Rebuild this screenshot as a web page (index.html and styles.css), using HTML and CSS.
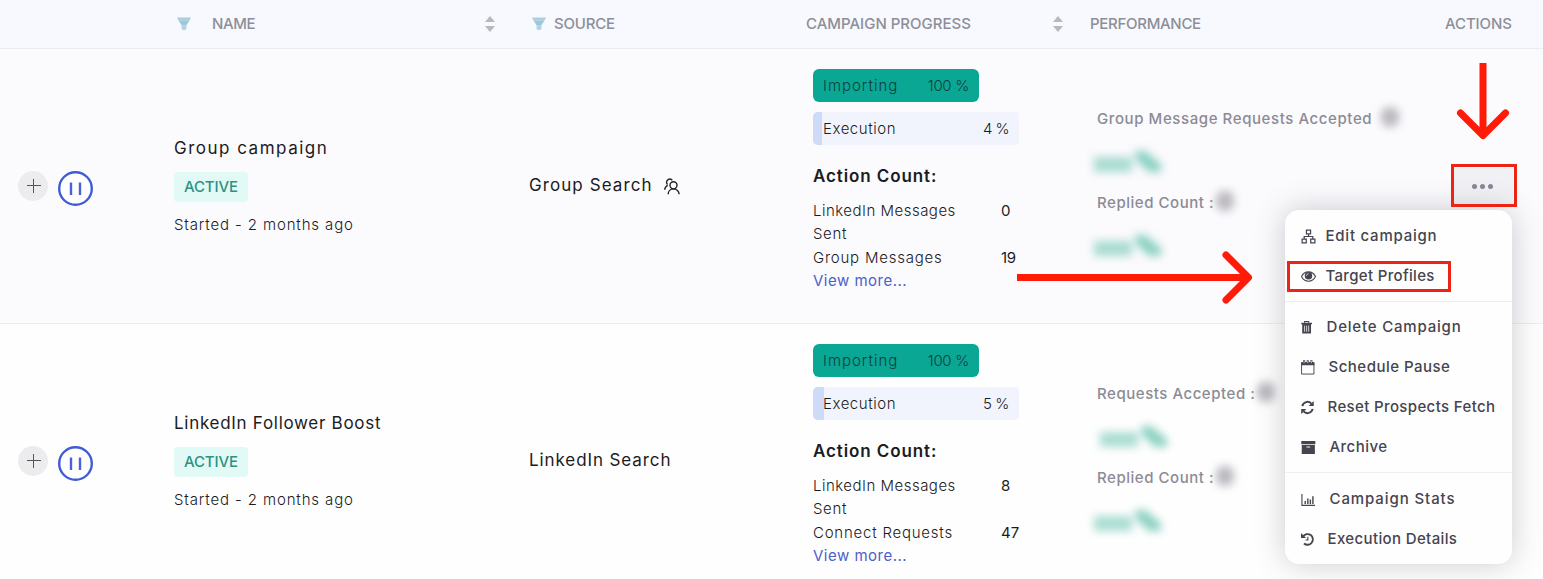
FILE: index.html
```
<!DOCTYPE html>
<html lang="en">
<head>
<meta charset="utf-8">
<title>Campaigns</title>
<link rel="stylesheet" href="styles.css">
</head>
<body>
<svg width="0" height="0" class="defs">
  <symbol id="filter" viewBox="0 0 14 14"><path d="M0 .5h14l-1.500 3h-11z" fill="#a9cfe0"/><path d="M1.500 3.500h11L9.500 8h-5z" fill="#9cc6da"/><path d="M4.500 8h5v3.500L8.500 13h-3l-1-1.500z" fill="#b2d5e3"/></symbol>
  <symbol id="sort" viewBox="0 0 10 16"><path d="M5 0l5 6H0zM5 16l5-6H0z" fill="#b9b9bd"/></symbol>
  <symbol id="pause" viewBox="0 0 36 36"><circle cx="18.500" cy="18.500" r="16.300" fill="#fff" stroke="#3f5cd8" stroke-width="2.400"/><path d="M14 12.500V25M23 12.500V25" stroke="#4a62d6" stroke-width="2.400"/></symbol>
  <symbol id="plus" viewBox="0 0 30 30"><circle cx="15" cy="15" r="15" fill="#ececef"/><path d="M9 14.500h14M15.500 8v14" stroke="#555" stroke-width="1"/></symbol>
  <symbol id="blur" viewBox="0 0 80 40"><g fill="#86cfbf"><rect x="5" y="14" width="38" height="15" opacity=".7"/><path d="M46 8h10l16 13v8H60L47 17z" opacity=".95"/></g></symbol>
</svg>
<div class="table">
  <div class="row head">
    <div></div>
    <div class="th name"><svg class="filter"><use href="#filter"/></svg><span class="t n4">NAME</span><svg class="sort"><use href="#sort"/></svg></div>
    <div class="th source"><svg class="filter"><use href="#filter"/></svg><span class="t n2">SOURCE</span></div>
    <div class="th progress"><span class="t">CAMPAIGN PROGRESS</span><svg class="sort"><use href="#sort"/></svg></div>
    <div class="th perf"><span class="t n3">PERFORMANCE</span></div>
    <div class="th acts"><span class="t n1">ACTIONS</span></div>
  </div>

  <div class="row body tinted">
    <div class="controls"><svg class="plus"><use href="#plus"/></svg><svg class="pause"><use href="#pause"/></svg></div>
    <div class="name-cell">
      <div class="title"><span class="t p15">Group campaign</span></div>
      <div class="badge"><span class="t n1">ACTIVE</span></div>
      <div class="started"><span class="t p85">Started - 2 months ago</span></div>
    </div>
    <div class="source-cell"><span class="t p10">Group Search</span>
      <svg class="people" viewBox="0 0 17 17" fill="none" stroke="#222" stroke-width="1.400"><circle cx="9.500" cy="7.300" r="3.500"/><path d="M4.200 16.200c0-3 2.200-5.300 5.300-5.300s5.600 2.300 5.600 5.300M8.300 2.200C7.300.9 5.400.7 4 1.600 2.200 2.700 2.200 5 3.500 6.500M.7 11.700c.2-2 1.200-3.600 3-4.400"/></svg>
    </div>
    <div class="progress-cell">
      <div class="bar done"><span class="t p95">Importing</span><span class="t n3">100 %</span></div>
      <div class="bar exec"><i class="fill" style="width:4.500%"></i><span class="t p55">Execution</span><span class="t n5">4 %</span></div>
      <div class="count-title"><span class="t p90">Action Count:</span></div>
      <div class="count"><div class="label"><span class="t p50">LinkedIn Messages</span><br><span class="t p60">Sent</span></div><b>0</b></div>
      <div class="count"><div class="label"><span class="t p75">Group Messages</span></div><b class="n4">19</b></div>
      <div class="more"><span class="t p50">View more...</span></div>
    </div>
    <div class="perf-cell">
      <div class="metric"><span class="t p58">Group Message Requests Accepted</span><i class="smudge gap"></i></div>
      <svg class="value"><use href="#blur"/></svg>
      <div class="metric"><span class="t p55">Replied Count :</span><i class="smudge"></i></div>
      <svg class="value"><use href="#blur"/></svg>
    </div>
    <div class="action-cell"><div class="dots"><i></i><i></i><i></i></div></div>
  </div>

  <div class="row body">
    <div class="controls"><svg class="plus"><use href="#plus"/></svg><svg class="pause"><use href="#pause"/></svg></div>
    <div class="name-cell">
      <div class="title"><span class="t p70">LinkedIn Follower Boost</span></div>
      <div class="badge"><span class="t n1">ACTIVE</span></div>
      <div class="started"><span class="t p85">Started - 2 months ago</span></div>
    </div>
    <div class="source-cell"><span class="t p90">LinkedIn Search</span></div>
    <div class="progress-cell">
      <div class="bar done"><span class="t p95">Importing</span><span class="t n3">100 %</span></div>
      <div class="bar exec"><i class="fill" style="width:5.300%"></i><span class="t p55">Execution</span><span class="t n4">5 %</span></div>
      <div class="count-title"><span class="t p90">Action Count:</span></div>
      <div class="count"><div class="label"><span class="t p50">LinkedIn Messages</span><br><span class="t p60">Sent</span></div><b>8</b></div>
      <div class="count"><div class="label"><span class="t p75">Connect Requests</span></div><b>47</b></div>
      <div class="more"><span class="t p50">View more...</span></div>
    </div>
    <div class="perf-cell">
      <div class="metric"><span class="t p55">Requests Accepted :</span><i class="smudge"></i></div>
      <svg class="value wide"><use href="#blur"/></svg>
      <div class="metric"><span class="t p55">Replied Count :</span><i class="smudge"></i></div>
      <svg class="value"><use href="#blur"/></svg>
    </div>
    <div></div>
  </div>
</div>

<div class="menu">
  <div class="item"><svg viewBox="0 0 16 16" fill="none" stroke="currentColor" stroke-width="1.300"><path d="M5.800 1.200h4.400v4H5.800zM1.200 10.800h4.400v4H1.200zM10.400 10.800h4.400v4h-4.400zM8 5.200V8M3.400 10.800V8h9.200v2.800"/></svg><span class="t p75">Edit campaign</span></div>
  <div class="item"><svg viewBox="0 0 16 16"><path d="M8 3C4.500 3 2 5 .5 8 2 11 4.500 13 8 13s6-2 7.500-5C14 5 11.500 3 8 3z" fill="none" stroke="currentColor" stroke-width="1.200"/><circle cx="8" cy="7.300" r="4" fill="currentColor"/><path d="M5.800 7.200C5.900 5.900 6.800 5.200 8 5.100" fill="none" stroke="#fff" stroke-width=".8"/></svg><span class="t p35">Target Profiles</span></div>
  <hr>
  <div class="item d1"><svg viewBox="0 0 16 16"><path d="M.3 3h11.400v1.600h-1V14.500H1.300V4.600h-1z" fill="currentColor"/><path d="M3.800 3V1.600h4.400V3" fill="none" stroke="currentColor" stroke-width="1.200"/><path d="M3.800 6v6.500M6 6v6.500M8.200 6v6.500" stroke="#fff" stroke-width=".8"/></svg><span class="t p80">Delete Campaign</span></div>
  <div class="item d3"><svg viewBox="0 0 16 16"><path d="M.6 3h13.200v12H.6z" fill="none" stroke="currentColor"/><path d="M.2 2.500h14V5.500H.2zM2.200.3h2.200V4H2.200zM6.100.3h2.200V4H6.100zM10 .3h2.200V4H10z" fill="currentColor"/><path d="M3.300 1.200v2.200M7.200 1.200v2.200M11.100 1.200v2.200" stroke="#fff" stroke-width=".7"/></svg><span class="t p50">Schedule Pause</span></div>
  <div class="item d2"><svg viewBox="0 0 16 16"><path d="M1.400 6.500A5.600 5.600 0 0 1 11 3.800M12.400 9.500A5.600 5.600 0 0 1 2.800 12.200" fill="none" stroke="currentColor" stroke-width="2.100"/><path d="M13.600 1v5.500H8.100zM.2 15V9.500h5.500z" fill="currentColor"/></svg><span class="t p37">Reset Prospects Fetch</span></div>
  <div class="item d4"><svg viewBox="0 0 16 16" fill="currentColor"><path d="M.3 1h15v3.400H.3zM.8 5.200h14V14.800H.8z"/><path d="M5.800 7.500h4" stroke="#fff" stroke-width="1"/></svg><span class="t p45">Archive</span></div>
  <hr class="second">
  <div class="item d4"><svg viewBox="0 0 16 16" fill="none" stroke="currentColor"><path d="M1 2v12.300H15" stroke-width="1.200"/><path d="M4.500 12.800V9.500M7.300 12.800V7M10 12.800V8M12.700 12.800V4.500" stroke-width="1.500"/></svg><span class="t p90">Campaign Stats</span></div>
  <div class="item d2"><svg viewBox="0 0 16 16" fill="none" stroke="currentColor"><path d="M2.200 4.800A5.700 5.700 0 1 1 3.200 12.200" stroke-width="2"/><path d="M0 1v5.500h5.500z" fill="currentColor" stroke="none"/><path d="M7.300 5v3.500H4.800" stroke-width="1.200"/></svg><span class="t p37">Execution Details</span></div>
</div>
<div class="mark mark-dots"></div>
<div class="mark mark-target"></div>
<svg class="arrows" viewBox="0 0 1543 579" fill="none" stroke="#ff1b08"><path d="M1483 63v72" stroke-width="7"/><path d="M1460.500 113l22.500 22.500 22.500-22.500" stroke-width="7" stroke-linecap="round" stroke-linejoin="round"/><path d="M1017 277.500h232" stroke-width="7"/><path d="M1226 255l22.500 22.500-22.500 22.500" stroke-width="7" stroke-linecap="round" stroke-linejoin="round"/></svg>
</body>
</html>
```
FILE: styles.css
```
* { box-sizing: border-box; }
body { margin: 0; width: 1543px; height: 579px; overflow: hidden; position: relative; background: #fff; font: 15px/20px Inter, "Open Sans", sans-serif; color: #1b1b22; }
svg { display: block; flex: none; }
.defs { position: absolute; }
.t { display: inline-block; white-space: nowrap; }

/* letter tracking steps: n = tighter, p = looser */
.n5 { letter-spacing: -.57px; }
.n4 { letter-spacing: -.42px; }
.n3 { letter-spacing: -.3px; }
.n2 { letter-spacing: -.18px; }
.n1 { letter-spacing: -.1px; }
.p35 { letter-spacing: .33px; }
.p37 { letter-spacing: .37px; }
.p45 { letter-spacing: .46px; }
.p50 { letter-spacing: .49px; }
.p55 { letter-spacing: .54px; }
.p58 { letter-spacing: .59px; }
.p60 { letter-spacing: .63px; }
.p70 { letter-spacing: .71px; }
.p75 { letter-spacing: .77px; }
.p80 { letter-spacing: .81px; }
.p85 { letter-spacing: .86px; }
.p90 { letter-spacing: .9px; }
.p95 { letter-spacing: .98px; }
.p10 { letter-spacing: 1.08px; }
.p15 { letter-spacing: 1.5px; }

.row { display: grid; grid-template-columns: 174px 355px 284px 284px 354px 92px; }
.head { height: 49px; background: #f7f9fe; border-bottom: 1px solid #ebecf3; color: #8d8e98; font-weight: 500; }
.th { display: flex; align-items: center; height: 48px; }
.filter { width: 14px; height: 14px; }
.sort { width: 10px; height: 16px; margin-left: auto; }
.name { padding: 0 34px 0 3px; gap: 21px; }
.source { padding-left: 3px; gap: 8px; }
.progress { margin-left: -7px; padding-right: 34px; }
.perf { margin-left: -7px; }
.acts { margin-left: -6px; }
.body { height: 275px; background: #fefefe; }
.tinted { background: #fbfafd; border-bottom: 1px solid #ececf2; }
.controls { display: flex; align-items: center; gap: 10px; padding-left: 18px; height: 277px; }
.plus { width: 30px; height: 30px; margin-top: -3px; }
.pause { width: 36px; height: 36px; margin-left: -1px; }
.name-cell { padding-top: 89px; }
.title { font-size: 17px; }
.badge { width: 74px; height: 30px; margin-top: 14px; border-radius: 4px; background: #e2faf6; color: #2e9183; font-weight: 500; display: flex; align-items: center; justify-content: center; }
.started { margin-top: 13px; font-weight: 300; }
.source-cell { display: flex; height: 272px; align-items: center; gap: 11px; font-size: 17px; }
.people { width: 17px; height: 17px; margin-top: 3px; }

.progress-cell { padding-top: 20px; }
.bar { position: relative; display: flex; align-items: center; justify-content: space-between; height: 33px; padding: 0 10px; font-weight: 300; }
.done { width: 166px; background: #0ba795; border-radius: 6px; color: #103e3c; }
.exec { width: 206px; margin-top: 10px; background: #f1f4fc; border-radius: 4px; }
.exec .t { position: relative; }
.fill { position: absolute; left: 0; top: 0; height: 33px; background: #cddbf9; border-radius: 5px 0 0 5px; }
.count-title { margin-top: 21px; font-size: 17px; font-weight: 600; }
.count { display: flex; line-height: 23.500px; font-weight: 300; }
.count-title + .count { margin-top: 12.500px; }
.label { width: 188px; }
.count b { font-weight: 400; }
.more { line-height: 23px; color: #4b5fc9; }

.perf-cell { padding-top: 60px; color: #8b8b95; font-weight: 500; }
.metric { display: flex; align-items: center; height: 20px; }
.smudge { width: 18px; height: 20px; margin: -5px 0 0 2px; background: #bbb9bf; border-radius: 8px; filter: blur(4.500px); }
.gap { margin-left: 9px; }
.value { width: 80px; height: 40px; margin: 14px 0 10px -8px; filter: blur(4.500px); }
.wide { margin-left: -2px; }
.action-cell { display: flex; align-items: center; height: 275px; }
.dots { display: flex; align-items: center; justify-content: center; gap: 3px; width: 62px; height: 38px; background: #f1f1f5; }
.dots i { width: 5px; height: 5px; border-radius: 50%; background: #85879a; }

.menu { position: absolute; left: 1285px; top: 210px; width: 227px; height: 354px; padding-top: 6px; background: #fefefe; border-radius: 14px; box-shadow: 0 0 30px rgba(60, 60, 70, .26); color: #45444f; font-weight: 500; }
.item { display: flex; align-items: center; gap: 9.500px; height: 40px; padding-left: 16px; }
.item svg { width: 15px; height: 15px; }
.d1 { gap: 10.500px; }
.d2 { gap: 11.500px; }
.d3 { gap: 12.500px; }
.d4 { gap: 13.500px; }
.menu hr { height: 1px; margin: 5px 0; border: 0; background: #eeeef4; }
.menu .second { margin-bottom: 6px; }
.mark { position: absolute; border: 3px solid #ec2415; }
.mark-dots { left: 1451px; top: 164px; width: 66px; height: 43px; }
.mark-target { left: 1287px; top: 261px; width: 164px; height: 31px; }
.arrows { position: absolute; left: 0; top: 0; width: 1543px; height: 579px; }
```
